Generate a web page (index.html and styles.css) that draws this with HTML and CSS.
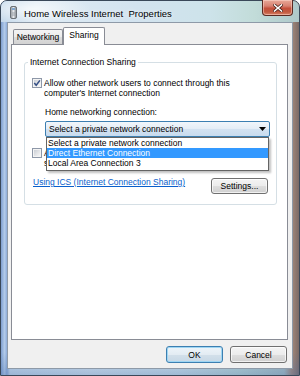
FILE: index.html
```html
<!DOCTYPE html>
<html>
<head>
<meta charset="utf-8">
<link rel="stylesheet" href="styles.css">
</head>
<body>
<div class="window">
  <div class="titlebar">
    <svg class="app-icon" width="7" height="13" viewBox="0 0 7 13">
      <defs>
        <linearGradient id="ig" x1="0" x2="1" y1="0" y2="0">
          <stop offset="0" stop-color="#8c9196"/>
          <stop offset="0.5" stop-color="#e6e9ec"/>
          <stop offset="1" stop-color="#7d8287"/>
        </linearGradient>
      </defs>
      <rect x="0.5" y="0.5" width="6" height="12" rx="1.5" fill="url(#ig)" stroke="#6b7177"/>
      <rect x="2" y="2" width="3" height="2" fill="#7fa6cf"/>
      <line x1="2" y1="7" x2="5" y2="7" stroke="#9aa0a6"/>
      <line x1="2" y1="9" x2="5" y2="9" stroke="#9aa0a6"/>
    </svg>
    <span class="title">Home Wireless Internet&nbsp; Properties</span>
    <div class="close">
      <svg width="10" height="8" viewBox="0 0 10 8">
        <path d="M1.5 1 L8.5 7 M8.5 1 L1.5 7" stroke="#4a2018" stroke-width="3" stroke-linecap="square"/>
        <path d="M1.5 1 L8.5 7 M8.5 1 L1.5 7" stroke="#ffffff" stroke-width="1.6" stroke-linecap="square"/>
      </svg>
    </div>
  </div>

  <div class="client">
    <div class="tabs">
      <div class="tab">Networking</div>
      <div class="tab active">Sharing</div>
    </div>

    <div class="panel">
      <fieldset class="group">
        <legend class="group-title">Internet Connection Sharing</legend>

        <div class="check-row">
          <svg class="checkbox" width="10" height="10" viewBox="0 0 10 10">
            <defs>
              <linearGradient id="cb" x1="0" y1="0" x2="1" y2="1">
                <stop offset="0" stop-color="#cbcfd5"/>
                <stop offset="1" stop-color="#f6f6f6"/>
              </linearGradient>
            </defs>
            <rect x="0.5" y="0.5" width="9" height="9" fill="#f4f4f4" stroke="#8e98a8"/>
            <rect x="2" y="2" width="6" height="6" fill="url(#cb)"/>
            <path d="M2.3 5 L4.2 7.2 L7.9 2.4" fill="none" stroke="#354f85" stroke-width="1.5"/>
          </svg>
          <span class="check-label">Allow other network users to connect through this<br>computer's Internet connection</span>
        </div>

        <div class="sub">
          <div class="sub-label">Home networking connection:</div>
          <div class="combo-wrap">
            <div class="combo">
              <span>Select a private network connection</span>
              <svg width="7" height="4" viewBox="0 0 7 4"><path d="M0 0 H7 L3.5 4 Z" fill="#000"/></svg>
            </div>
            <div class="dropdown">
              <div class="item">Select a private network connection</div>
              <div class="item selected">Direct Ethernet Connection</div>
              <div class="item">Local Area Connection 3</div>
            </div>
          </div>
        </div>

        <div class="check-row second">
          <svg class="checkbox" width="10" height="10" viewBox="0 0 10 10">
            <rect x="0.5" y="0.5" width="9" height="9" fill="#f4f4f4" stroke="#8e98a8"/>
            <rect x="2" y="2" width="6" height="6" fill="url(#cb)"/>
          </svg>
          <span class="check-label">Allow other network users to control or disable the<br>shared Internet connection</span>
        </div>

        <div class="bottom-row">
          <span class="link">Using ICS (Internet Connection Sharing)</span>
          <div class="btn settings">Settings...</div>
        </div>
      </fieldset>
    </div>

    <div class="buttons">
      <div class="btn default">OK</div>
      <div class="btn">Cancel</div>
    </div>
  </div>
</div>
</body>
</html>
```
FILE: styles.css
```css
* {
  box-sizing: border-box;
}

body {
  margin: 0;
  width: 300px;
  height: 376px;
  overflow: hidden;
  font-family: "Liberation Sans", Arial, sans-serif;
  font-size: 8.5px;
  color: #000;
  background: #fff;
}

.window {
  width: 300px;
  height: 376px;
  display: flex;
  flex-direction: column;
  padding: 0 6px 6px;
  border: 1px solid #3a4859;
  border-radius: 7px 7px 0 0;
  background:
    linear-gradient(to bottom, rgba(255,255,255,0) 94%, rgba(70,110,170,0.35) 100%),
    linear-gradient(to right, #7f9fd0 0%, #b3cbe9 1.2%, #8eacd9 2%, #c9dced 3%, #d7e6f1 30%, #cfe3ec 60%, #bcd8d6 80%, #a9c0c4 95%, #a58a7c 97.5%, #7b6a66 100%);
}

.titlebar {
  height: 21px;
  display: flex;
  align-items: center;
  margin: 0 -6px;
  padding: 0 6px;
  border-radius: 6px 6px 0 0;
  background:
    radial-gradient(ellipse 60px 14px at 30px 8px, rgba(255,255,255,0.7), rgba(255,255,255,0)),
    linear-gradient(to right, #c4d8ea 0%, #dfebf4 12%, #d3e3ef 45%, #cde3ea 70%, #c2dcd9 85%, #aec8ca 100%);
}

.app-icon {
  margin-left: 3px;
  margin-top: 1px;
  flex: none;
}

.title {
  margin-left: 7px;
  font-size: 9.5px;
  margin-top: 3px;
  color: #000;
  text-shadow: 0 0 4px rgba(255,255,255,0.9);
  white-space: nowrap;
}

.close {
  margin-left: auto;
  align-self: flex-start;
  margin-top: -1px;
  width: 31px;
  height: 16px;
  border: 1px solid #5b2a22;
  border-top: none;
  border-radius: 0 0 4px 4px;
  background: linear-gradient(to bottom, #e8a999 0%, #d88272 40%, #c4503c 55%, #c25a40 80%, #d8846a 100%);
  box-shadow: inset 0 0 0 1px rgba(255,220,210,0.5);
  display: flex;
  align-items: center;
  justify-content: center;
}

.client {
  flex: 1;
  display: flex;
  flex-direction: column;
  border: 1px solid #8e9aa8;
  background: #f0f0f0;
  padding: 4px 4px 5px 3px;
}

.tabs {
  height: 17px;
  display: flex;
  align-items: flex-end;
  padding-left: 2px;
  position: relative;
  z-index: 1;
}

.tab {
  width: 50px;
  height: 15px;
  border: 1px solid #898c95;
  border-bottom: none;
  border-radius: 2px 2px 0 0;
  background: linear-gradient(to bottom, #f4f4f4 0%, #ebebeb 50%, #dddddd 51%, #d2d2d2 100%);
  text-align: center;
  line-height: 14px;
  white-space: nowrap;
}

.tab.active {
  width: 42px;
  height: 18px;
  margin-bottom: -1px;
  background: #fff;
  line-height: 15px;
}

.panel {
  flex: 1;
  border: 1px solid #898c95;
  background: #fff;
  padding: 0 10px 0 12px;
}

.group {
  margin: 12px 0 0;
  padding: 10px 6px 10px 7px;
  border: 1px solid #d5dfe5;
  border-radius: 3px;
  min-width: 0;
}

.group-title {
  padding: 0 2px;
  margin-left: -4px;
  line-height: 11px;
  white-space: nowrap;
}

.check-row {
  display: flex;
  align-items: flex-start;
  gap: 2px;
}

.checkbox {
  flex: none;
}

.check-label {
  line-height: 10px;
  white-space: nowrap;
}

.sub {
  padding-left: 13px;
  margin-top: 9px;
}

.sub-label {
  line-height: 10px;
  white-space: nowrap;
}

.combo-wrap {
  position: relative;
  margin-top: 4px;
}

.combo {
  height: 16px;
  border: 1px solid #3c7fb1;
  border-radius: 2px;
  background: linear-gradient(to bottom, #f1f6fb 0%, #e4edf6 50%, #d3e2f1 51%, #c8dbee 100%);
  display: flex;
  align-items: center;
  justify-content: space-between;
  padding: 0 3px 0 3px;
  white-space: nowrap;
}

.dropdown {
  position: absolute;
  top: 16px;
  left: 1px;
  right: 1px;
  height: 34px;
  border: 1px solid #646464;
  background: #fff;
  box-shadow: 2px 2px 2px rgba(0,0,0,0.25);
  z-index: 5;
}

.item {
  height: 10px;
  line-height: 10px;
  padding-left: 1px;
  white-space: nowrap;
}

.item.selected {
  background: #3399ff;
  color: #fff;
}

.check-row.second {
  margin-top: 11px;
}

.bottom-row {
  margin-top: 10px;
  display: flex;
  justify-content: space-between;
  align-items: flex-start;
}

.link {
  padding-left: 1px;
  margin-top: -1px;
  line-height: 10px;
  color: #0a5fcc;
  text-decoration: underline;
  white-space: nowrap;
}

.btn {
  width: 57px;
  height: 17px;
  border: 1px solid #707070;
  border-radius: 3px;
  background: linear-gradient(to bottom, #f4f4f4 0%, #ececec 50%, #dedede 51%, #d0d0d0 100%);
  box-shadow: inset 0 0 0 1px rgba(255,255,255,0.7);
  display: flex;
  align-items: center;
  justify-content: center;
  white-space: nowrap;
}

.btn.settings {
  height: 16px;
  margin-right: 2px;
}

.buttons {
  margin-top: 6px;
  display: flex;
  justify-content: flex-end;
  gap: 7px;
  padding-right: 1px;
}

.btn.default {
  border-color: #3c7fb1;
  box-shadow: inset 0 0 0 1px #9fd6f3;
  background: linear-gradient(to bottom, #eef5fa 0%, #e3ecf3 50%, #d3e0ea 51%, #c7d8e6 100%);
}
```
